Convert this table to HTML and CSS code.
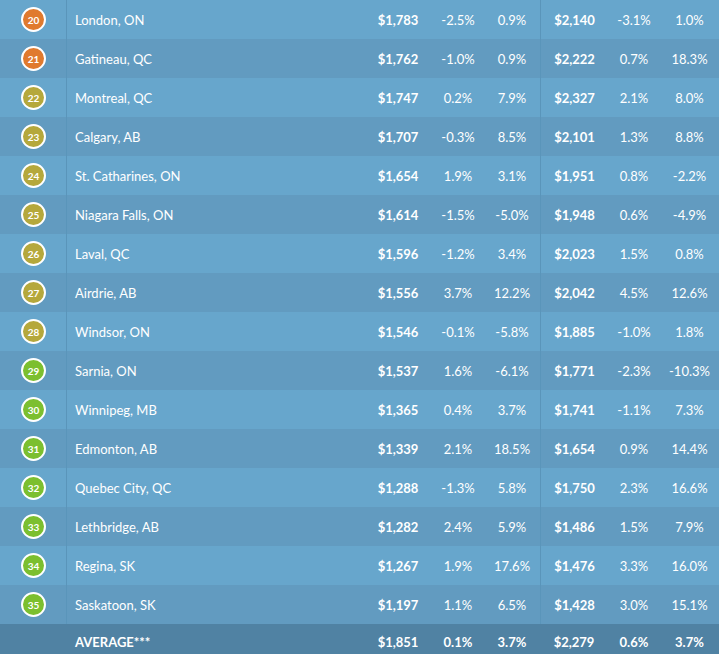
FILE: index.html
```html
<!DOCTYPE html>
<html>
<head>
<meta charset="utf-8">
<link rel="stylesheet" href="styles.css">
</head>
<body>
<div class="table">
  <div class="row"><div class="rank"><span class="badge orange">20</span></div><div class="city">London, ON</div><div class="n b">$1,783</div><div class="n">-2.5%</div><div class="n">0.9%</div><div class="n b sep">$2,140</div><div class="n">-3.1%</div><div class="n">1.0%</div></div>
  <div class="row alt"><div class="rank"><span class="badge orange">21</span></div><div class="city">Gatineau, QC</div><div class="n b">$1,762</div><div class="n">-1.0%</div><div class="n">0.9%</div><div class="n b sep">$2,222</div><div class="n">0.7%</div><div class="n">18.3%</div></div>
  <div class="row"><div class="rank"><span class="badge olive">22</span></div><div class="city">Montreal, QC</div><div class="n b">$1,747</div><div class="n">0.2%</div><div class="n">7.9%</div><div class="n b sep">$2,327</div><div class="n">2.1%</div><div class="n">8.0%</div></div>
  <div class="row alt"><div class="rank"><span class="badge olive">23</span></div><div class="city">Calgary, AB</div><div class="n b">$1,707</div><div class="n">-0.3%</div><div class="n">8.5%</div><div class="n b sep">$2,101</div><div class="n">1.3%</div><div class="n">8.8%</div></div>
  <div class="row"><div class="rank"><span class="badge olive">24</span></div><div class="city">St. Catharines, ON</div><div class="n b">$1,654</div><div class="n">1.9%</div><div class="n">3.1%</div><div class="n b sep">$1,951</div><div class="n">0.8%</div><div class="n">-2.2%</div></div>
  <div class="row alt"><div class="rank"><span class="badge olive">25</span></div><div class="city">Niagara Falls, ON</div><div class="n b">$1,614</div><div class="n">-1.5%</div><div class="n">-5.0%</div><div class="n b sep">$1,948</div><div class="n">0.6%</div><div class="n">-4.9%</div></div>
  <div class="row"><div class="rank"><span class="badge olive">26</span></div><div class="city">Laval, QC</div><div class="n b">$1,596</div><div class="n">-1.2%</div><div class="n">3.4%</div><div class="n b sep">$2,023</div><div class="n">1.5%</div><div class="n">0.8%</div></div>
  <div class="row alt"><div class="rank"><span class="badge olive">27</span></div><div class="city">Airdrie, AB</div><div class="n b">$1,556</div><div class="n">3.7%</div><div class="n">12.2%</div><div class="n b sep">$2,042</div><div class="n">4.5%</div><div class="n">12.6%</div></div>
  <div class="row"><div class="rank"><span class="badge olive">28</span></div><div class="city">Windsor, ON</div><div class="n b">$1,546</div><div class="n">-0.1%</div><div class="n">-5.8%</div><div class="n b sep">$1,885</div><div class="n">-1.0%</div><div class="n">1.8%</div></div>
  <div class="row alt"><div class="rank"><span class="badge green">29</span></div><div class="city">Sarnia, ON</div><div class="n b">$1,537</div><div class="n">1.6%</div><div class="n">-6.1%</div><div class="n b sep">$1,771</div><div class="n">-2.3%</div><div class="n">-10.3%</div></div>
  <div class="row"><div class="rank"><span class="badge green">30</span></div><div class="city">Winnipeg, MB</div><div class="n b">$1,365</div><div class="n">0.4%</div><div class="n">3.7%</div><div class="n b sep">$1,741</div><div class="n">-1.1%</div><div class="n">7.3%</div></div>
  <div class="row alt"><div class="rank"><span class="badge green">31</span></div><div class="city">Edmonton, AB</div><div class="n b">$1,339</div><div class="n">2.1%</div><div class="n">18.5%</div><div class="n b sep">$1,654</div><div class="n">0.9%</div><div class="n">14.4%</div></div>
  <div class="row"><div class="rank"><span class="badge green">32</span></div><div class="city">Quebec City, QC</div><div class="n b">$1,288</div><div class="n">-1.3%</div><div class="n">5.8%</div><div class="n b sep">$1,750</div><div class="n">2.3%</div><div class="n">16.6%</div></div>
  <div class="row alt"><div class="rank"><span class="badge green">33</span></div><div class="city">Lethbridge, AB</div><div class="n b">$1,282</div><div class="n">2.4%</div><div class="n">5.9%</div><div class="n b sep">$1,486</div><div class="n">1.5%</div><div class="n">7.9%</div></div>
  <div class="row"><div class="rank"><span class="badge green">34</span></div><div class="city">Regina, SK</div><div class="n b">$1,267</div><div class="n">1.9%</div><div class="n">17.6%</div><div class="n b sep">$1,476</div><div class="n">3.3%</div><div class="n">16.0%</div></div>
  <div class="row alt"><div class="rank"><span class="badge green">35</span></div><div class="city">Saskatoon, SK</div><div class="n b">$1,197</div><div class="n">1.1%</div><div class="n">6.5%</div><div class="n b sep">$1,428</div><div class="n">3.0%</div><div class="n">15.1%</div></div>
  <div class="row avg"><div class="rank"></div><div class="city b">AVERAGE***</div><div class="n b">$1,851</div><div class="n b">0.1%</div><div class="n b">3.7%</div><div class="n b">$2,279</div><div class="n b">0.6%</div><div class="n b">3.7%</div></div>
</div>
</body>
</html>
```
FILE: styles.css
```css
html, body {
  margin: 0;
  padding: 0;
  background: #4f82a3;
}
body {
  font-family: "Lato", "Open Sans", sans-serif;
  color: #ffffff;
  width: 719px;
  height: 654px;
  overflow: hidden;
}
.table {
  display: flex;
  flex-direction: column;
}
.row {
  display: grid;
  grid-template-columns: 67px 297px 68px 52px 56px 68px 52px 59px;
  height: 39px;
  align-items: center;
  background: #67a6cc;
  font-size: 13px;
}
.row.alt {
  background: #629bc0;
}
.row.avg {
  background: #5082a3;
  height: 36px;
}
.rank {
  height: 100%;
  border-right: 1px solid #5a95ba;
  box-sizing: border-box;
  display: flex;
  align-items: center;
  justify-content: center;
  padding-left: 1px;
}
.avg .rank {
  border-right: none;
}
.badge {
  width: 21px;
  height: 21px;
  border: 2px solid #ffffff;
  border-radius: 50%;
  display: flex;
  align-items: center;
  justify-content: center;
  font-size: 10px;
  font-weight: 700;
  color: #ffffff;
}
.orange { background: #e07a2e; }
.olive { background: #b5a83c; }
.green { background: #7cbf2f; }
.city {
  padding-left: 8px;
  white-space: nowrap;
}
.n {
  text-align: center;
  white-space: nowrap;
  height: 100%;
  display: flex;
  align-items: center;
  justify-content: center;
  box-sizing: border-box;
}
.b {
  font-weight: 700;
}
.sep {
  border-left: 1px solid #5a95ba;
}
.avg .city, .avg .n {
  padding-top: 0;
}
```
